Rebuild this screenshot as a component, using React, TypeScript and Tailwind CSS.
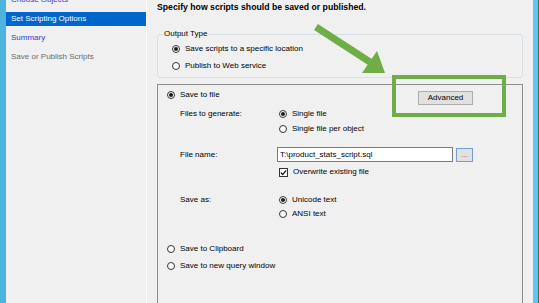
import React from 'react';

function Radio({ checked = false }: { checked?: boolean }) {
  return (
    <span className="w-[8px] h-[8px] rounded-full border border-[#333333] bg-white flex items-center justify-center shrink-0">
      {checked && <span className="w-[4px] h-[4px] rounded-full bg-[#1a1a1a]" />}
    </span>
  );
}

function Option({ label, checked = false, className = '' }: { label: string; checked?: boolean; className?: string }) {
  return (
    <div className={`flex items-center gap-[5px] h-[14px] ${className}`}>
      <Radio checked={checked} />
      <span className="whitespace-nowrap">{label}</span>
    </div>
  );
}

function Checkbox({ label }: { label: string }) {
  return (
    <div className="flex items-center gap-[5px] h-[14px] pl-[2px]">
      <span className="w-[9px] h-[9px] border border-[#333333] bg-white flex items-center justify-center shrink-0">
        <svg width="7" height="7" viewBox="0 0 7 7">
          <path d="M0.8 3.6 L2.7 5.5 L6.2 1.3" fill="none" stroke="#1a1a1a" strokeWidth="1.3" />
        </svg>
      </span>
      <span className="whitespace-nowrap">{label}</span>
    </div>
  );
}

const steps = [
  { label: 'Choose Objects', state: 'link' },
  { label: 'Set Scripting Options', state: 'active' },
  { label: 'Summary', state: 'link' },
  { label: 'Save or Publish Scripts', state: 'disabled' },
];

export default function App() {
  return (
    <div className="relative w-[539px] h-[303px] overflow-hidden flex bg-[#f0f0f0] text-[8px] leading-[10px] text-black font-['Liberation_Sans',Arial,sans-serif]">
      {/* left edge */}
      <div className="w-[6px] shrink-0 bg-[#4cb4dc]" />

      {/* wizard steps */}
      <div className="w-[141px] shrink-0 border-r border-white overflow-hidden">
        <div className="flex flex-col gap-[5px] mt-[-7px]">
          {steps.map((s) => (
            <div
              key={s.label}
              className={
                s.state === 'active'
                  ? 'h-[14px] flex items-center pl-[5px] bg-[#0066cc] text-white'
                  : s.state === 'link'
                  ? 'h-[14px] flex items-center pl-[5px] text-[#3636d8]'
                  : 'h-[14px] flex items-center pl-[5px] text-[#6b6b6b]'
              }
            >
              {s.label}
            </div>
          ))}
        </div>
      </div>

      {/* page */}
      <div className="flex-1 px-[10px] flex flex-col">
        <div className="mt-[2px] h-[10px] pl-[0px] font-bold text-[8.7px] whitespace-nowrap">
          Specify how scripts should be saved or published.
        </div>

        <fieldset className="mt-[17px] border border-[#d9e0e6] rounded-[3px] pl-[5px] pt-[3px] pb-[4px]">
          <legend className="px-[1px] leading-[10px]">Output Type</legend>
          <div className="ml-[9px] flex flex-col gap-[3px]">
            <Option label="Save scripts to a specific location" checked />
            <Option label="Publish to Web service" />
          </div>
        </fieldset>

        <div className="mt-[6px] h-[300px] shrink-0 border border-[#8c8c8c] pl-[9px] pt-[3px]">
          <div className="w-[306px] flex flex-col">
            <div className="h-[14px] flex items-start justify-between">
              <Option label="Save to file" checked />
              <button className="mt-[3px] w-[55px] h-[14px] border border-[#adadad] bg-[#e1e1e1] flex items-center justify-center">
                Advanced
              </button>
            </div>

            <div className="ml-[13px] mt-[5px] h-[14px] flex items-center">
              <span className="w-[97px] shrink-0">Files to generate:</span>
              <Option label="Single file" checked className="pl-[2px]" />
            </div>
            <div className="ml-[13px] mt-[1px] h-[14px] flex items-center">
              <span className="w-[97px] shrink-0" />
              <Option label="Single file per object" className="pl-[2px]" />
            </div>

            <div className="ml-[13px] mt-[11px] h-[15px] flex items-center">
              <span className="w-[97px] shrink-0">File name:</span>
              <div className="w-[176px] h-[15px] border border-[#7a7a7a] bg-white flex items-center pl-[2px] whitespace-nowrap">
                T:\product_stats_script.sql
              </div>
              <button className="ml-[3px] w-[17px] h-[14px] border border-[#6f9fd3] bg-[#e1e1e1] flex items-center justify-center text-[#777777] leading-[6px]">
                ...
              </button>
            </div>
            <div className="ml-[13px] mt-[3px] h-[14px] flex items-center">
              <span className="w-[97px] shrink-0" />
              <Checkbox label="Overwrite existing file" />
            </div>

            <div className="ml-[13px] mt-[14px] h-[14px] flex items-center">
              <span className="w-[97px] shrink-0">Save as:</span>
              <Option label="Unicode text" checked className="pl-[2px]" />
            </div>
            <div className="ml-[13px] h-[14px] flex items-center">
              <span className="w-[97px] shrink-0" />
              <Option label="ANSI text" className="pl-[2px]" />
            </div>

            <Option label="Save to Clipboard" className="mt-[21px]" />
            <Option label="Save to new query window" className="mt-[3px]" />
          </div>
        </div>
      </div>

      {/* right edge */}
      <div className="w-[6px] shrink-0 bg-[#5fc6ec] border-r border-[#3e6275]" />

      {/* callout annotation */}
      <svg className="absolute inset-0 pointer-events-none" width="539" height="303" viewBox="0 0 539 303">
        <line x1="316" y1="27" x2="370" y2="62" stroke="#6fae46" strokeWidth="7" />
        <polygon points="362,73 377,51 385,73" fill="#6fae46" />
      </svg>
      <div className="absolute left-[392px] top-[75px] w-[114px] h-[42px] border-[4px] border-[#6fae46] pointer-events-none" />
    </div>
  );
}
